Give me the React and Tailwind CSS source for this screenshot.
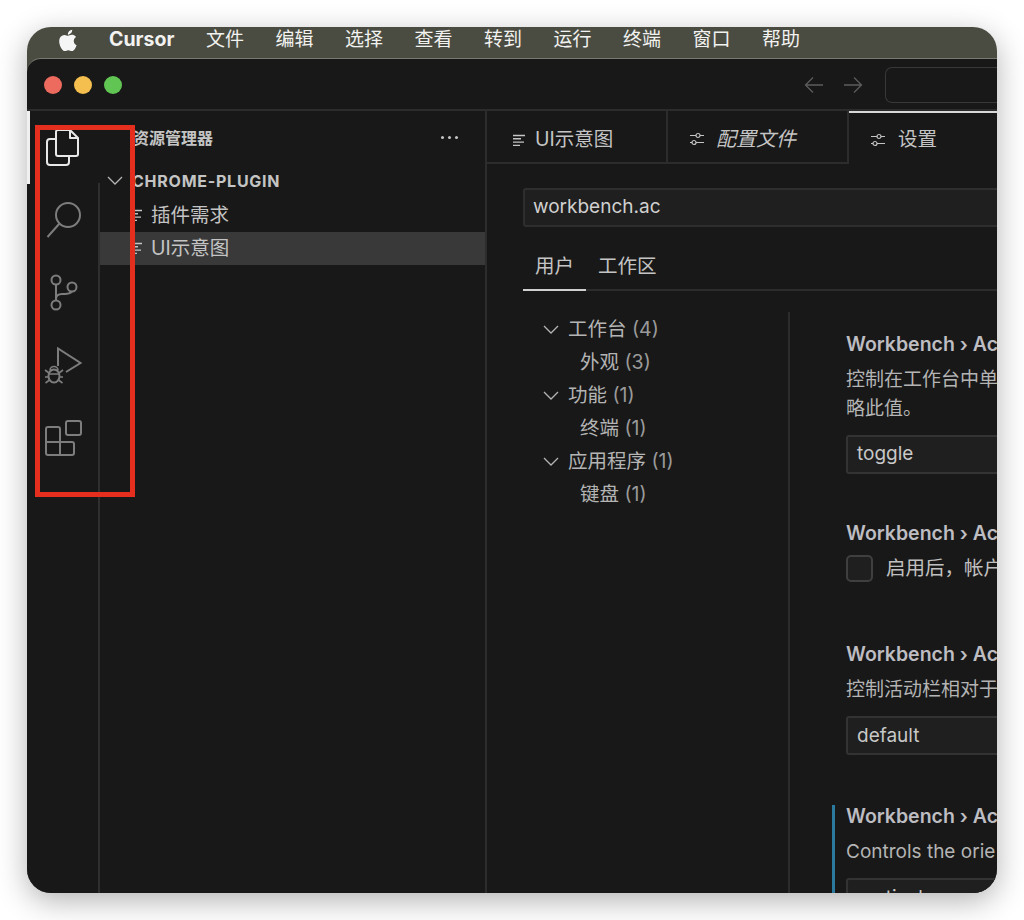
import React from "react";

const cjk = "font-['Inter','Noto_Sans_CJK_SC',sans-serif]";

const menus = ["文件", "编辑", "选择", "查看", "转到", "运行", "终端", "窗口", "帮助"];

const Chevron = ({ className }) => (
  <svg width="16" height="9" viewBox="0 0 16 9" fill="none" stroke="#b4b4b4" strokeWidth="1.3" className={className}>
    <path d="M1 1l7 7 7-7" />
  </svg>
);

const FileLines = ({ className }) => (
  <svg width="14" height="13" viewBox="0 0 14 13" fill="none" stroke="#c4c4c4" strokeWidth="1.4" className={className}>
    <path d="M1 1.5h12M1 4.8h8M1 8.1h11M1 11.4h7" />
  </svg>
);

const Sliders = () => (
  <svg width="16" height="14" viewBox="0 0 16 14" fill="none" stroke="#c4c4c4" strokeWidth="1.2">
    <path d="M1 3.5h6M11 3.5h4M1 10.5h2M7 10.5h8" />
    <circle cx="9" cy="3.5" r="2" />
    <circle cx="5" cy="10.5" r="2" />
  </svg>
);

const TreeGroup = ({ label, count, child, childCount }) => (
  <>
    <div className="flex h-[33px] items-center">
      <Chevron className="ml-[20px]" />
      <span className="ml-[9px]">{label} <span className="text-[#9a9a9a]">{count}</span></span>
    </div>
    <div className="flex h-[33px] items-center pl-[57px]">
      {child}&nbsp;<span className="text-[#9a9a9a]">{childCount}</span>
    </div>
  </>
);

const Setting = ({ title, desc, select, check, mark, className }) => (
  <div className={`relative pl-[56px] ${className}`}>
    {mark && <div className="absolute left-[42px] top-[2px] h-[200px] w-[3px] bg-[#2b7a9e]" />}
    <div className="h-[26px] whitespace-nowrap text-[19.5px] leading-[26px] font-semibold text-[#bdbdc2]">{title}</div>
    {check ? (
      <div className="mt-[8px] flex items-center">
        <div className="h-[27px] w-[27px] shrink-0 rounded-[5px] border-2 border-[#3f3f3f] bg-[#1f1f1f]" />
        <span className="ml-[13px] whitespace-nowrap text-[19.5px] text-[#c0c0c0]">{desc}</span>
      </div>
    ) : (
      <div className="mt-[8px] text-[19px] leading-[29px] whitespace-pre text-[#b4b4b4]">{desc}</div>
    )}
    {select && (
      <div className="mt-[12px] flex h-[39px] w-[300px] items-center rounded-[3px] border-2 border-[#333333] bg-[#1f1f1f] pl-[9px] text-[19px] text-[#c8c8c8]">
        {select}
      </div>
    )}
  </div>
);

export default function App() {
  return (
    <div className={`relative h-[920px] w-[1024px] overflow-hidden bg-white ${cjk}`}>
      <div className="absolute left-[27px] top-[27px] flex h-[866px] w-[970px] flex-col overflow-hidden rounded-[24px] bg-[#4a4c42] shadow-[0_8px_30px_rgba(0,0,0,0.3)]">
        {/* menu bar */}
        <div className="flex h-[31px] shrink-0 items-center pb-[5px] text-[19px] text-[#f2f2f0]">
          <svg width="25" height="27" viewBox="0 0 24 24" fill="#f5f5f5" className="ml-[29px]">
            <path d="M17.05 12.54c-.03-2.6 2.12-3.85 2.22-3.91-1.21-1.77-3.09-2.01-3.76-2.04-1.6-.16-3.12.94-3.93.94-.81 0-2.06-.92-3.39-.89-1.74.03-3.35 1.01-4.25 2.57-1.81 3.14-.46 7.8 1.3 10.35.86 1.25 1.89 2.65 3.24 2.6 1.3-.05 1.79-.84 3.36-.84 1.57 0 2.01.84 3.39.81 1.4-.02 2.28-1.27 3.14-2.53.99-1.45 1.4-2.86 1.42-2.93-.03-.01-2.72-1.04-2.74-4.13zM14.47 4.9c.72-.87 1.2-2.08 1.07-3.28-1.03.04-2.28.69-3.02 1.56-.66.77-1.24 2-1.09 3.18 1.15.09 2.32-.58 3.04-1.46z" />
          </svg>
          <span className="ml-[28px] w-[97px] text-[19.5px] font-bold">Cursor</span>
          {menus.map((m) => (
            <span key={m} className="w-[69.5px] shrink-0">{m}</span>
          ))}
        </div>

        {/* window */}
        <div className="flex min-h-0 flex-1 flex-col rounded-tl-[14px] border-t border-[#77786f] bg-[#181818]">
          <div className="flex h-[52px] shrink-0 items-center border-b-2 border-[#2c2c2c] pt-[1px]">
            <div className="ml-[17px] flex gap-[12px]">
              <div className="h-[18px] w-[18px] rounded-full bg-[#ed6a5e]" />
              <div className="h-[18px] w-[18px] rounded-full bg-[#f4bf4f]" />
              <div className="h-[18px] w-[18px] rounded-full bg-[#61c554]" />
            </div>
            <div className="ml-auto flex items-center">
              <svg width="20" height="18" viewBox="0 0 20 18" fill="none" stroke="#5c5c5c" strokeWidth="1.3"><path d="M19 9H1.5M9 1.5 1.5 9 9 16.5" /></svg>
              <svg width="20" height="18" viewBox="0 0 20 18" fill="none" stroke="#5c5c5c" strokeWidth="1.3" className="ml-[19px]"><path d="M1 9h17.5M11 1.5 18.5 9 11 16.5" /></svg>
              <div className="ml-[22px] h-[36px] w-[112px] rounded-l-[7px] border border-r-0 border-[#383838]" />
            </div>
          </div>

          <div className="flex min-h-0 flex-1">
            {/* activity bar */}
            <div className="relative w-[72px] shrink-0">
              <div className="absolute left-0 top-0 h-[73px] w-[3px] bg-[#f0f0f0]" />
              <svg width="38" height="38" viewBox="0 0 38 38" fill="none" stroke="#e8e8e8" strokeWidth="2" strokeLinejoin="round" className="absolute left-[18px] top-[18px]">
                <path d="M13 1h12l8 8v16a2 2 0 0 1-2 2H13a2 2 0 0 1-2-2V3a2 2 0 0 1 2-2z" />
                <path d="M25 1v8h8" />
                <path d="M11 10H5a3 3 0 0 0-3 3v20a3 3 0 0 0 3 3h16a3 3 0 0 0 3-3v-6" />
              </svg>
              <svg width="36" height="38" viewBox="0 0 36 38" fill="none" stroke="#7d7d7d" strokeWidth="2" className="absolute left-[19px] top-[90px]">
                <circle cx="22" cy="14" r="12" />
                <path d="M13.5 22.5 1.5 36" />
              </svg>
              <svg width="30" height="38" viewBox="0 0 30 38" fill="none" stroke="#7d7d7d" strokeWidth="2" className="absolute left-[22px] top-[163px]">
                <circle cx="7" cy="6" r="4.5" />
                <circle cx="23" cy="13" r="4.5" />
                <circle cx="7" cy="31" r="4.5" />
                <path d="M7 10.5v16M7 25c0-3 2-5 6-5h3c4 0 6-1.500 7-2.500" />
              </svg>
              <svg width="38" height="38" viewBox="0 0 38 38" fill="none" stroke="#7d7d7d" strokeWidth="2" className="absolute left-[17px] top-[236px]">
                <path d="M14 19V1.500L36.500 16 22 25" />
                <ellipse cx="10" cy="29" rx="5.500" ry="6.500" />
                <path d="M6 23.500a4 4 0 0 1 8 0M4.500 27h11" strokeWidth="1.600" />
                <path d="M1 23l4 3M19 23l-4 3M1 30h3.500M19 30h-3.500M1.500 36l4-3M18.500 36l-4-3" strokeWidth="1.600" />
              </svg>
              <svg width="38" height="38" viewBox="0 0 38 38" fill="none" stroke="#7d7d7d" strokeWidth="2" strokeLinejoin="round" className="absolute left-[17px] top-[308px]">
                <rect x="22" y="2" width="15" height="14" rx="2" />
                <path d="M4 8h10a2 2 0 0 1 2 2v13h12a2 2 0 0 1 2 2v9a2 2 0 0 1-2 2H4a2 2 0 0 1-2-2V10a2 2 0 0 1 2-2zM2 23h14M16 23v13" />
              </svg>
            </div>

            {/* sidebar */}
            <div className="relative w-[388px] shrink-0 border-r-2 border-[#2c2c2c] text-[#c4c4c4]">
              <div className="flex h-[53px] items-center justify-between pl-[34px] pr-[27px] text-[16px] font-semibold text-[#c4c4c4]">
                <span>资源管理器</span>
                <span className="flex gap-[4px]">
                  <i className="h-[3px] w-[3px] rounded-full bg-[#c4c4c4]" />
                  <i className="h-[3px] w-[3px] rounded-full bg-[#c4c4c4]" />
                  <i className="h-[3px] w-[3px] rounded-full bg-[#c4c4c4]" />
                </span>
              </div>
              <div className="flex h-[33px] items-center">
                <Chevron className="ml-[8px]" />
                <span className="ml-[9px] text-[16px] font-bold tracking-[0.75px]">CHROME-PLUGIN</span>
              </div>
              <div className="mt-[2px] flex h-[33px] items-center pl-[30px] text-[19.5px]">
                <FileLines />
                <span className="ml-[8px]">插件需求</span>
              </div>
              <div className="flex h-[33px] items-center bg-[#393939] pl-[30px] text-[19.5px]">
                <FileLines />
                <span className="ml-[8px]">UI示意图</span>
              </div>
              <div className="absolute bottom-0 left-[-1px] top-[72px] w-[2px] bg-[#2f2f2f]" />
            </div>

            {/* editor */}
            <div className="min-w-0 flex-1 overflow-hidden text-[#c4c4c4]">
              <div className="flex h-[53px] text-[19.5px]">
                <div className="flex w-[181px] items-center border-r-2 border-b-2 border-[#2c2c2c] pl-[25px] pt-[7px]">
                  <FileLines />
                  <span className="ml-[9px]">UI示意图</span>
                </div>
                <div className="flex w-[181px] items-center border-r-2 border-b-2 border-[#2c2c2c] pl-[21px] pt-[5px]">
                  <Sliders />
                  <span className="ml-[11px] text-[20px] italic">配置文件</span>
                </div>
                <div className="flex flex-1 items-center border-t-2 border-[#d8d8d8] pl-[21px] pt-[3px]">
                  <Sliders />
                  <span className="ml-[12px]">设置</span>
                </div>
              </div>

              <div className="pl-[36px]">
                <div className="mt-[24px] flex h-[39px] items-center rounded-l-[3px] border-2 border-r-0 border-[#2e2e2e] bg-[#1f1f1f] pl-[8px] text-[19px] text-[#d0d0d0]">
                  workbench.ac
                </div>
                <div className="mt-[23px] flex h-[41px] border-b-2 border-[#2c2c2c] text-[19.5px] leading-[32px]">
                  <span className="h-[41px] w-[63px] border-b-2 border-[#d0d0d0] pl-[12px]">用户</span>
                  <span className="ml-[12px]">工作区</span>
                </div>
              </div>

              <div className="mt-[21px] flex">
                <div className="w-[303px] shrink-0 border-r-2 border-[#2c2c2c] pt-[1px] text-[19.5px] text-[#b4b4b4]">
                  <div className="pl-[36px]">
                    <TreeGroup label="工作台" count="(4)" child="外观" childCount="(3)" />
                    <TreeGroup label="功能" count="(1)" child="终端" childCount="(1)" />
                    <TreeGroup label="应用程序" count="(1)" child="键盘" childCount="(1)" />
                  </div>
                  <div className="h-[400px]" />
                </div>
                <div className="min-w-0 flex-1 overflow-hidden pt-[19px]">
                  <Setting title="Workbench › Ac" desc={"控制在工作台中单\n略此值。"} select="toggle" />
                  <Setting className="mt-[46px]" title="Workbench › Ac" desc="启用后，帐户" check />
                  <Setting className="mt-[58px]" title="Workbench › Ac" desc="控制活动栏相对于" select="default" />
                  <Setting className="mt-[48px]" mark title="Workbench › Ac" desc="Controls the orie" select="vertical" />
                </div>
              </div>
            </div>
          </div>
        </div>
      </div>

      {/* red annotation box */}
      <div className="absolute left-[35px] top-[125px] h-[372px] w-[100px] border-[5px] border-[#e62e1f]" />
    </div>
  );
}
